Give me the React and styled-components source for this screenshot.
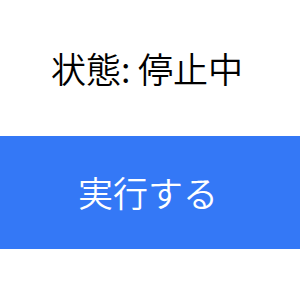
import React from "react";
import styled, { createGlobalStyle } from "styled-components";

const Global = createGlobalStyle`
  html, body { margin: 0; padding: 0; background: #fff; }
  body { font-family: "Noto Sans CJK JP", "Noto Sans", sans-serif; }
`;

const Page = styled.div`
  width: 300px;
  height: 300px;
  display: flex;
  flex-direction: column;
  align-items: stretch;
`;

const Status = styled.div`
  height: 136px;
  display: flex;
  align-items: center;
  justify-content: center;
  font-size: 35px;
  font-weight: 350;
  color: #000;
  padding-bottom: 2px;
  box-sizing: border-box;
  padding-right: 6px;
`;

const RunButton = styled.button`
  height: 113px;
  width: 100%;
  border: none;
  margin: 0;
  padding: 0 4px 2px 0;
  background: #3478f6;
  color: #fff;
  font-family: "Noto Sans CJK JP", "Noto Sans", sans-serif;
  font-size: 35px;
  font-weight: 350;
  display: flex;
  align-items: center;
  justify-content: center;
`;

export default function App() {
  return (
    <Page>
      <Global />
      <Status>状態: 停止中</Status>
      <RunButton>実行する</RunButton>
    </Page>
  );
}
